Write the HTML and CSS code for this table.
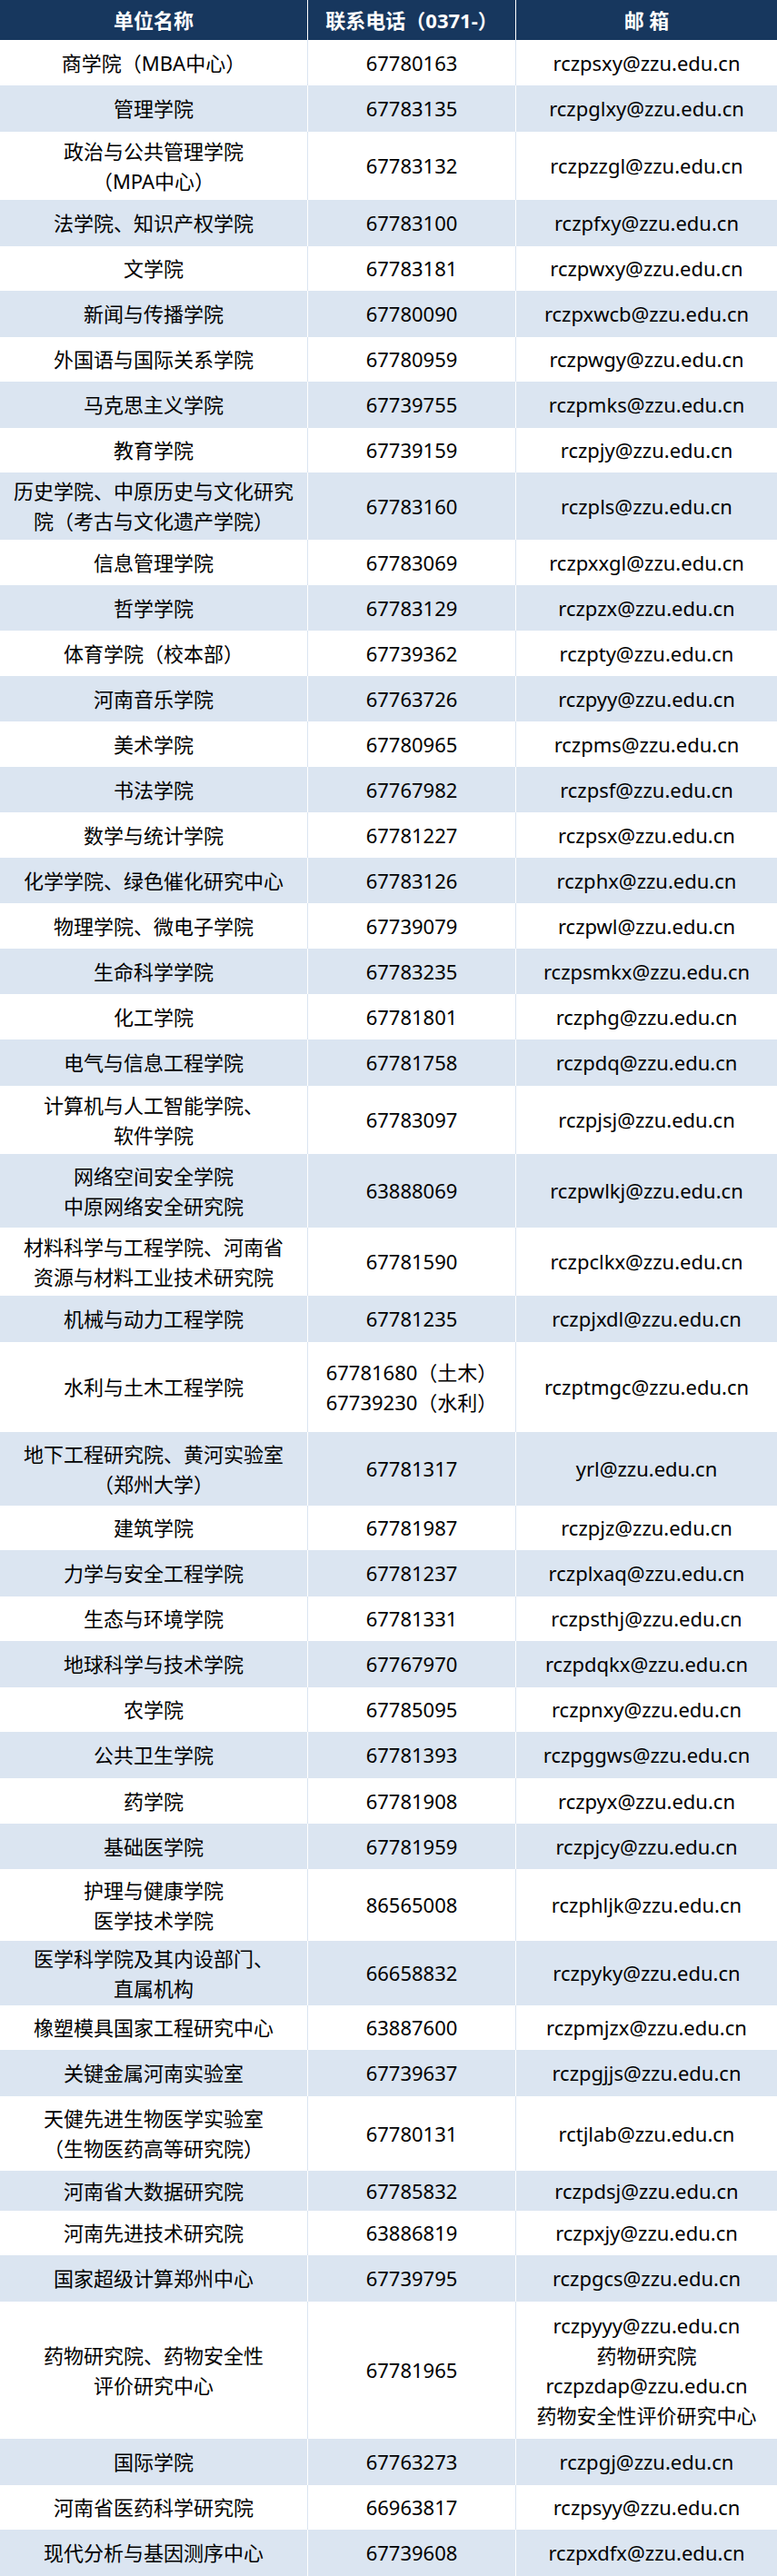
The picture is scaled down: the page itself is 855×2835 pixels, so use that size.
FILE: index.html
```html
<!DOCTYPE html>
<html lang="zh-CN">
<head>
<meta charset="utf-8">
<title>联系方式</title>
<link rel="stylesheet" href="styles.css">
</head>
<body>
<div class="table">
  <div class="row head h44"><div class="c">单位名称</div><div class="c">联系电话（0371-）</div><div class="c">邮 箱</div></div>
  <div class="row h50"><div class="c">商学院（MBA中心）</div><div class="c">67780163</div><div class="c">rczpsxy@zzu.edu.cn</div></div>
  <div class="row alt h51"><div class="c">管理学院</div><div class="c">67783135</div><div class="c">rczpglxy@zzu.edu.cn</div></div>
  <div class="row h75"><div class="c">政治与公共管理学院<br>（MPA中心）</div><div class="c">67783132</div><div class="c">rczpzzgl@zzu.edu.cn</div></div>
  <div class="row alt h51"><div class="c">法学院、知识产权学院</div><div class="c">67783100</div><div class="c">rczpfxy@zzu.edu.cn</div></div>
  <div class="row h49"><div class="c">文学院</div><div class="c">67783181</div><div class="c">rczpwxy@zzu.edu.cn</div></div>
  <div class="row alt h51"><div class="c">新闻与传播学院</div><div class="c">67780090</div><div class="c">rczpxwcb@zzu.edu.cn</div></div>
  <div class="row h49"><div class="c">外国语与国际关系学院</div><div class="c">67780959</div><div class="c">rczpwgy@zzu.edu.cn</div></div>
  <div class="row alt h51"><div class="c">马克思主义学院</div><div class="c">67739755</div><div class="c">rczpmks@zzu.edu.cn</div></div>
  <div class="row h49"><div class="c">教育学院</div><div class="c">67739159</div><div class="c">rczpjy@zzu.edu.cn</div></div>
  <div class="row alt h74"><div class="c">历史学院、中原历史与文化研究<br>院（考古与文化遗产学院）</div><div class="c">67783160</div><div class="c">rczpls@zzu.edu.cn</div></div>
  <div class="row h50"><div class="c">信息管理学院</div><div class="c">67783069</div><div class="c">rczpxxgl@zzu.edu.cn</div></div>
  <div class="row alt h50"><div class="c">哲学学院</div><div class="c">67783129</div><div class="c">rczpzx@zzu.edu.cn</div></div>
  <div class="row h50"><div class="c">体育学院（校本部）</div><div class="c">67739362</div><div class="c">rczpty@zzu.edu.cn</div></div>
  <div class="row alt h50"><div class="c">河南音乐学院</div><div class="c">67763726</div><div class="c">rczpyy@zzu.edu.cn</div></div>
  <div class="row h50"><div class="c">美术学院</div><div class="c">67780965</div><div class="c">rczpms@zzu.edu.cn</div></div>
  <div class="row alt h50"><div class="c">书法学院</div><div class="c">67767982</div><div class="c">rczpsf@zzu.edu.cn</div></div>
  <div class="row h50"><div class="c">数学与统计学院</div><div class="c">67781227</div><div class="c">rczpsx@zzu.edu.cn</div></div>
  <div class="row alt h50"><div class="c">化学学院、绿色催化研究中心</div><div class="c">67783126</div><div class="c">rczphx@zzu.edu.cn</div></div>
  <div class="row h50"><div class="c">物理学院、微电子学院</div><div class="c">67739079</div><div class="c">rczpwl@zzu.edu.cn</div></div>
  <div class="row alt h50"><div class="c">生命科学学院</div><div class="c">67783235</div><div class="c">rczpsmkx@zzu.edu.cn</div></div>
  <div class="row h50"><div class="c">化工学院</div><div class="c">67781801</div><div class="c">rczphg@zzu.edu.cn</div></div>
  <div class="row alt h51"><div class="c">电气与信息工程学院</div><div class="c">67781758</div><div class="c">rczpdq@zzu.edu.cn</div></div>
  <div class="row h75"><div class="c">计算机与人工智能学院、<br>软件学院</div><div class="c">67783097</div><div class="c">rczpjsj@zzu.edu.cn</div></div>
  <div class="row alt h81"><div class="c">网络空间安全学院<br>中原网络安全研究院</div><div class="c">63888069</div><div class="c">rczpwlkj@zzu.edu.cn</div></div>
  <div class="row h75"><div class="c">材料科学与工程学院、河南省<br>资源与材料工业技术研究院</div><div class="c">67781590</div><div class="c">rczpclkx@zzu.edu.cn</div></div>
  <div class="row alt h51"><div class="c">机械与动力工程学院</div><div class="c">67781235</div><div class="c">rczpjxdl@zzu.edu.cn</div></div>
  <div class="row h99"><div class="c">水利与土木工程学院</div><div class="c">67781680（土木）<br>67739230（水利）</div><div class="c">rczptmgc@zzu.edu.cn</div></div>
  <div class="row alt h81"><div class="c">地下工程研究院、黄河实验室<br>（郑州大学）</div><div class="c">67781317</div><div class="c">yrl@zzu.edu.cn</div></div>
  <div class="row h49"><div class="c">建筑学院</div><div class="c">67781987</div><div class="c">rczpjz@zzu.edu.cn</div></div>
  <div class="row alt h51"><div class="c">力学与安全工程学院</div><div class="c">67781237</div><div class="c">rczplxaq@zzu.edu.cn</div></div>
  <div class="row h49"><div class="c">生态与环境学院</div><div class="c">67781331</div><div class="c">rczpsthj@zzu.edu.cn</div></div>
  <div class="row alt h51"><div class="c">地球科学与技术学院</div><div class="c">67767970</div><div class="c">rczpdqkx@zzu.edu.cn</div></div>
  <div class="row h49"><div class="c">农学院</div><div class="c">67785095</div><div class="c">rczpnxy@zzu.edu.cn</div></div>
  <div class="row alt h51"><div class="c">公共卫生学院</div><div class="c">67781393</div><div class="c">rczpggws@zzu.edu.cn</div></div>
  <div class="row h50"><div class="c">药学院</div><div class="c">67781908</div><div class="c">rczpyx@zzu.edu.cn</div></div>
  <div class="row alt h50"><div class="c">基础医学院</div><div class="c">67781959</div><div class="c">rczpjcy@zzu.edu.cn</div></div>
  <div class="row h79"><div class="c">护理与健康学院<br>医学技术学院</div><div class="c">86565008</div><div class="c">rczphljk@zzu.edu.cn</div></div>
  <div class="row alt h71"><div class="c">医学科学院及其内设部门、<br>直属机构</div><div class="c">66658832</div><div class="c">rczpyky@zzu.edu.cn</div></div>
  <div class="row h49"><div class="c">橡塑模具国家工程研究中心</div><div class="c">63887600</div><div class="c">rczpmjzx@zzu.edu.cn</div></div>
  <div class="row alt h51"><div class="c">关键金属河南实验室</div><div class="c">67739637</div><div class="c">rczpgjjs@zzu.edu.cn</div></div>
  <div class="row h82"><div class="c">天健先进生物医学实验室<br>（生物医药高等研究院）</div><div class="c">67780131</div><div class="c">rctjlab@zzu.edu.cn</div></div>
  <div class="row alt h44"><div class="c">河南省大数据研究院</div><div class="c">67785832</div><div class="c">rczpdsj@zzu.edu.cn</div></div>
  <div class="row h49"><div class="c">河南先进技术研究院</div><div class="c">63886819</div><div class="c">rczpxjy@zzu.edu.cn</div></div>
  <div class="row alt h51"><div class="c">国家超级计算郑州中心</div><div class="c">67739795</div><div class="c">rczpgcs@zzu.edu.cn</div></div>
  <div class="row h151"><div class="c">药物研究院、药物安全性<br>评价研究中心</div><div class="c">67781965</div><div class="c">rczpyyy@zzu.edu.cn<br>药物研究院<br>rczpzdap@zzu.edu.cn<br>药物安全性评价研究中心</div></div>
  <div class="row alt h51"><div class="c">国际学院</div><div class="c">67763273</div><div class="c">rczpgj@zzu.edu.cn</div></div>
  <div class="row h49"><div class="c">河南省医药科学研究院</div><div class="c">66963817</div><div class="c">rczpsyy@zzu.edu.cn</div></div>
  <div class="row alt h51"><div class="c">现代分析与基因测序中心</div><div class="c">67739608</div><div class="c">rczpxdfx@zzu.edu.cn</div></div>
</div>
</body>
</html>
```

FILE: styles.css
```css
* { box-sizing: border-box; }
html, body {
  margin: 0;
  padding: 0;
  background: #ffffff;
}
body {
  font-family: "Noto Sans", "Noto Sans CJK SC", sans-serif;
  font-size: 22px;
  line-height: 33px;
  color: #000000;
}
.table {
  width: 855px;
  display: flex;
  flex-direction: column;
}
.row {
  display: grid;
  grid-template-columns: 339px 229px 287px;
  background: #ffffff;
}
.row .c {
  display: flex;
  align-items: center;
  justify-content: center;
  text-align: center;
  padding: 0 4px;
  border-right: 1px solid #dbe5f1;
  white-space: nowrap;
}
.row .c:last-child { border-right: none; }
.row.alt { background: #dbe5f1; }
.row.alt .c { border-right-color: #ffffff; }
.row.head {
  background: #17375e;
  color: #ffffff;
  font-weight: bold;
}
.row.head .c { border-right-color: #ffffff; }

.h44 { height: 44px; }
.h49 { height: 49px; }
.h50 { height: 50px; }
.h51 { height: 51px; }
.h71 { height: 71px; }
.h74 { height: 74px; }
.h75 { height: 75px; }
.h79 { height: 79px; }
.h81 { height: 81px; }
.h82 { height: 82px; }
.h99 { height: 99px; }
.h151 { height: 151px; }
```
